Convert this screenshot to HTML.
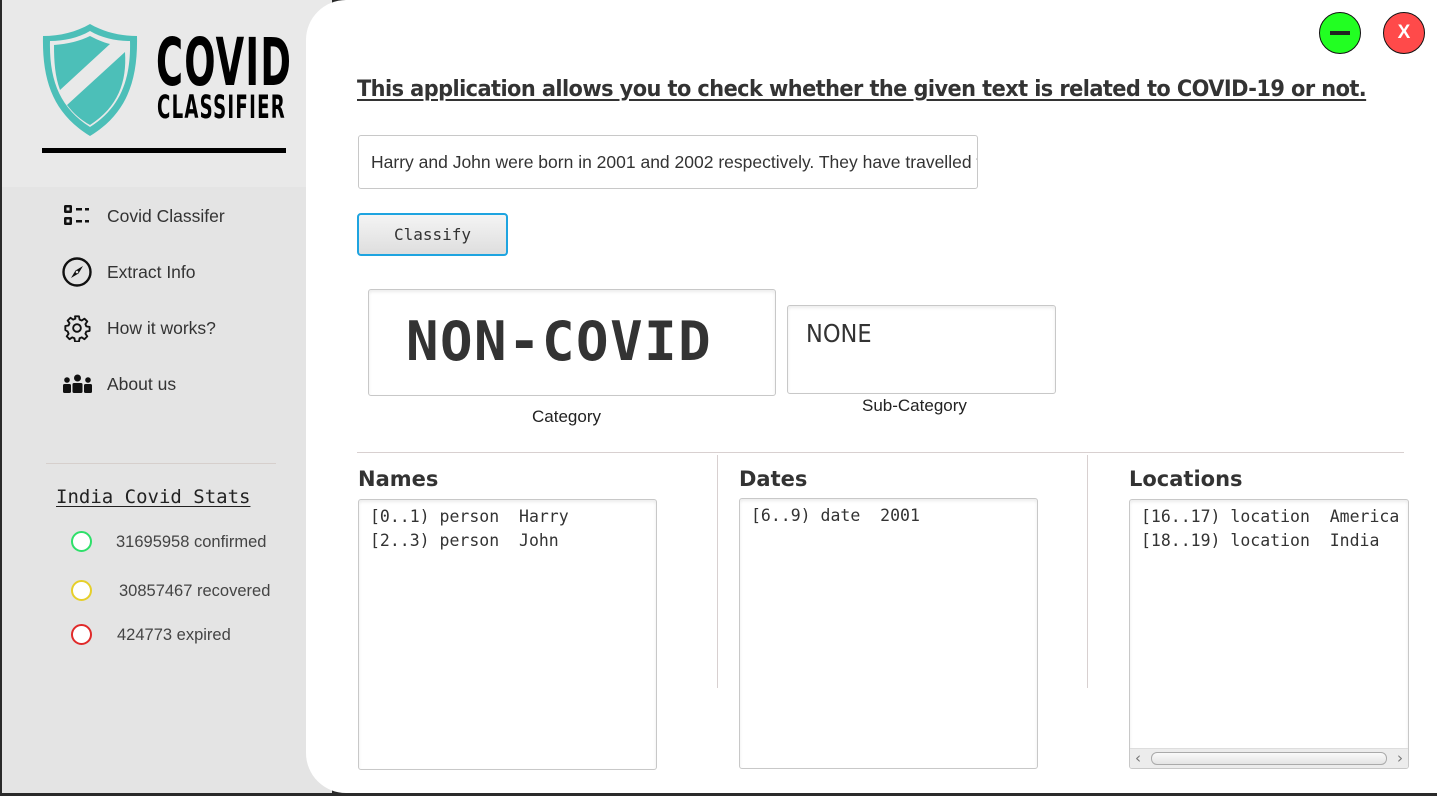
<!DOCTYPE html>
<html><head><meta charset="utf-8"><style>
*{margin:0;padding:0;box-sizing:border-box}
body{width:1437px;height:796px;overflow:hidden;background:#2a2a2a;font-family:"Liberation Sans",sans-serif;position:relative}
.side{position:absolute;left:2px;top:0;width:330px;height:793px;background:#e4e4e4}
.sidetop{position:absolute;left:2px;top:0;width:330px;height:187px;background:#e9e9e9}
.main{position:absolute;left:306px;top:0;width:1131px;height:793px;background:#fff;border-radius:40px 0 0 40px}
.abs{position:absolute}
.mono{font-family:"DejaVu Sans Mono","Liberation Mono",monospace}
.nav{position:absolute;left:107px;font-size:17.5px;color:#333}
.box{position:absolute;background:#fff;border:1px solid #c8c8c8;border-radius:3px;box-shadow:inset 0 2px 3px rgba(0,0,0,.08)}
.list{font-family:"DejaVu Sans Mono",monospace;font-size:16.5px;color:#333;line-height:24px;padding:5px 11px;white-space:pre}
.hd{position:absolute;font-size:21px;font-weight:bold;color:#333;font-family:"DejaVu Sans",sans-serif}
</style></head><body>
<div class="side"></div><div class="sidetop"></div>
<div class="main"></div>

<svg class="abs" style="left:40px;top:22px" width="100" height="116" viewBox="0 0 100 116">
<path d="M50 2 C36 10 20 14 3 14 C2 60 14 92 50 114 C86 92 98 60 97 14 C80 14 64 10 50 2Z" fill="#4cbfb8"/>
<path d="M50 9 C38 16 24 19 10 19 C9 58 20 86 50 105 C80 86 91 58 90 19 C76 19 62 16 50 9Z" fill="#e9e9e9"/>
<path d="M50 14 C40 19 28 22 14 23 C14 40 15 54 20 68 L70 22 C62 20 56 17 50 14Z M85 30 L27 83 C34 92 41 98 50 103 C78 85 87 60 85 30Z" fill="#4cbfb8"/>
</svg>
<div class="abs" style="left:156px;top:28px;font-size:66px;font-weight:bold;letter-spacing:2px;transform:scaleX(.62);transform-origin:left;font-family:'DejaVu Sans Condensed','Liberation Sans Narrow',sans-serif;color:#000;line-height:70px">COVID</div>
<div class="abs" style="left:157px;top:89px;font-size:32px;font-weight:bold;letter-spacing:2px;transform:scaleX(.63);transform-origin:left;font-family:'DejaVu Sans Condensed','Liberation Sans Narrow',sans-serif;color:#000;line-height:36px">CLASSIFIER</div>
<div class="abs" style="left:42px;top:148px;width:244px;height:5px;background:#000"></div>

<svg class="abs" style="left:63px;top:204px" width="28" height="24" viewBox="0 0 28 24"><rect x="1" y="1" width="8" height="8" rx="1.5" fill="#111"/><rect x="3.5" y="3.5" width="3" height="3" fill="#e4e4e4"/><rect x="1" y="13" width="8" height="8" rx="1.5" fill="#111"/><rect x="3.5" y="15.5" width="3" height="3" fill="#e4e4e4"/><rect x="13" y="4" width="6" height="2.5" fill="#111"/><rect x="22" y="4" width="4" height="2.5" fill="#111"/><rect x="13" y="16" width="6" height="2.5" fill="#111"/><rect x="22" y="16" width="4" height="2.5" fill="#111"/></svg>
<div class="nav" style="top:206px">Covid Classifer</div>
<svg class="abs" style="left:61px;top:256px" width="32" height="32" viewBox="0 0 32 32"><circle cx="16" cy="16" r="13.5" fill="none" stroke="#111" stroke-width="2.4"/><path d="M22 10 L17.5 17.5 L10 22 L14.5 14.5Z" fill="#111"/><circle cx="16" cy="16" r="1.3" fill="#e4e4e4"/></svg>
<div class="nav" style="top:262px">Extract Info</div>
<svg class="abs" style="left:63px;top:314px" width="28" height="28" viewBox="0 0 24 24"><path d="M10.3 2h3.4l.5 2.8 1.9.8 2.3-1.6 2.4 2.4-1.6 2.3.8 1.9 2.8.5v3.4l-2.8.5-.8 1.9 1.6 2.3-2.4 2.4-2.3-1.6-1.9.8-.5 2.8h-3.4l-.5-2.8-1.9-.8-2.3 1.6-2.4-2.4 1.6-2.3-.8-1.9L2 13.7v-3.4l2.8-.5.8-1.9L4 5.6l2.4-2.4 2.3 1.6 1.9-.8z" fill="none" stroke="#111" stroke-width="1.6" stroke-linejoin="round"/><circle cx="12" cy="12" r="3.3" fill="none" stroke="#111" stroke-width="1.6"/></svg>
<div class="nav" style="top:318px">How it works?</div>
<svg class="abs" style="left:62px;top:374px" width="31" height="20" viewBox="0 0 31 20"><circle cx="5" cy="6" r="2.8" fill="#111"/><rect x="1" y="10" width="8" height="9" rx="1.5" fill="#111"/><circle cx="15.5" cy="4" r="3.5" fill="#111"/><rect x="10.5" y="9" width="10" height="10" rx="1.5" fill="#111"/><circle cx="26" cy="6" r="2.8" fill="#111"/><rect x="22" y="10" width="8" height="9" rx="1.5" fill="#111"/></svg>
<div class="nav" style="top:374px">About us</div>

<div class="abs" style="left:46px;top:463px;width:230px;height:1px;background:#d6cfcc"></div>
<div class="abs mono" style="left:56px;top:486px;font-size:19px;color:#222;text-decoration:underline;text-underline-offset:3px">India Covid Stats</div>
<div class="abs" style="left:71px;top:531px;width:21px;height:21px;border:2px solid #2ee06a;border-radius:50%;background:#fff"></div>
<div class="abs" style="left:116px;top:533px;font-size:16.5px;color:#444">31695958 confirmed</div>
<div class="abs" style="left:71px;top:580px;width:21px;height:21px;border:2px solid #e6cf2a;border-radius:50%;background:#fff"></div>
<div class="abs" style="left:119px;top:582px;font-size:16.5px;color:#444">30857467 recovered</div>
<div class="abs" style="left:71px;top:624px;width:21px;height:21px;border:2px solid #e02a2a;border-radius:50%;background:#fff"></div>
<div class="abs" style="left:117px;top:626px;font-size:16.5px;color:#444">424773 expired</div>

<div class="abs" style="left:1319px;top:12px;width:42px;height:42px;border-radius:50%;background:#22ff22;border:1.5px solid #111"><div style="position:absolute;left:10px;top:18px;width:20px;height:4px;background:#222"></div></div>
<div class="abs" style="left:1383px;top:12px;width:42px;height:42px;border-radius:50%;background:#ff4a4a;border:1.5px solid #111;color:#fff;font-weight:bold;font-size:19px;text-align:center;line-height:40px">X</div>

<div class="abs" style="left:357px;top:77px;font-size:22px;font-weight:bold;color:#333;text-decoration:underline;text-underline-offset:3px;font-family:'DejaVu Sans',sans-serif;letter-spacing:-.6px;transform:scaleX(.95);transform-origin:left;white-space:nowrap">This application allows you to check whether the given text is related to COVID-19 or not.</div>

<div class="box" style="left:358px;top:135px;width:620px;height:54px;overflow:hidden;white-space:nowrap;font-size:17.5px;color:#333;padding:16px 12px;box-shadow:none">Harry and John were born in 2001 and 2002 respectively. They have travelled to America and India</div>

<div class="abs mono" style="left:357px;top:213px;width:151px;height:43px;border:2px solid #1ea4e0;border-radius:4px;background:linear-gradient(#f4f4f4,#dedede);font-size:16px;color:#333;text-align:center;line-height:39px">Classify</div>

<div class="box" style="left:368px;top:289px;width:408px;height:107px"><div class="mono" style="position:absolute;left:37px;top:20px;font-size:54px;font-weight:bold;color:#333;letter-spacing:1.5px">NON-COVID</div></div>
<div class="abs" style="left:532px;top:407px;font-size:17px;color:#222">Category</div>
<div class="box" style="left:787px;top:305px;width:269px;height:89px"><div style="position:absolute;left:18px;top:13px;font-size:25px;color:#333;font-family:'DejaVu Sans Condensed',sans-serif">NONE</div></div>
<div class="abs" style="left:862px;top:396px;font-size:17px;color:#222">Sub-Category</div>

<div class="abs" style="left:357px;top:452px;width:1047px;height:1px;background:#d8d0d0"></div>
<div class="abs" style="left:717px;top:455px;width:1px;height:233px;background:#d8d0d0"></div>
<div class="abs" style="left:1087px;top:455px;width:1px;height:233px;background:#d8d0d0"></div>

<div class="hd" style="left:358px;top:467px">Names</div>
<div class="box list" style="left:358px;top:499px;width:299px;height:271px">[0..1) person  Harry
[2..3) person  John</div>
<div class="hd" style="left:739px;top:467px">Dates</div>
<div class="box list" style="left:739px;top:498px;width:299px;height:271px">[6..9) date  2001</div>
<div class="hd" style="left:1129px;top:467px">Locations</div>
<div class="box list" style="left:1129px;top:499px;width:280px;height:270px;overflow:hidden">[16..17) location  America
[18..19) location  India<div style="position:absolute;left:0;right:0;bottom:0;height:20px;background:#ececec;border-top:1px solid #ddd"><div style="position:absolute;left:21px;right:21px;top:3px;height:13px;border:1px solid #aaa;border-radius:6px;background:linear-gradient(#fafafa,#e4e4e4)"></div><span style="position:absolute;left:5px;top:-3px;font-size:15px;color:#777;font-family:'DejaVu Sans',sans-serif">‹</span><span style="position:absolute;right:5px;top:-3px;font-size:15px;color:#777;font-family:'DejaVu Sans',sans-serif">›</span></div></div>
</body></html>
